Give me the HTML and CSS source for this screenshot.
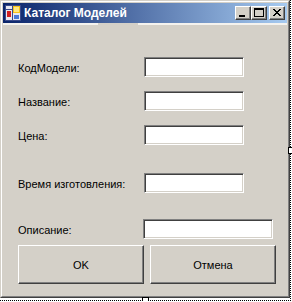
FILE: index.html
```html
<!DOCTYPE html>
<html lang="ru">
<head>
    <meta charset="UTF-8">
    <title>Каталог Моделей</title>
    <link rel="stylesheet" href="styles.css">
</head>
<body>
    <div class="surface">
        <div class="window">
            <div class="frame">
                <div class="titlebar">
                    <svg class="app-icon" width="16" height="16" viewBox="0 0 16 16">
                        <rect x="0.5" y="0.5" width="15" height="15" fill="#e8e8f0" stroke="#3a4a8a"/>
                        <line x1="1" y1="4.5" x2="15" y2="4.5" stroke="#3a4a8a"/>
                        <line x1="7.5" y1="1" x2="7.5" y2="15" stroke="#3a4a8a"/>
                        <rect x="8" y="1" width="7" height="7" fill="#f7c21a"/>
                        <rect x="9" y="2" width="5" height="5" fill="#ffe680"/>
                        <rect x="2" y="6" width="4" height="6" fill="#d22020"/>
                        <rect x="9" y="10" width="5" height="4" fill="#4a7ad8"/>
                    </svg>
                    <span class="title">Каталог Моделей</span>
                    <div class="caption-buttons">
                        <span class="cap-btn">
                            <svg width="14" height="12" viewBox="0 0 14 12"><rect x="3" y="8" width="6" height="2" fill="#000"/></svg>
                        </span>
                        <span class="cap-btn">
                            <svg width="14" height="12" viewBox="0 0 14 12"><rect x="2.5" y="1.5" width="9" height="8" fill="none" stroke="#000"/><rect x="2" y="1" width="10" height="2" fill="#000"/></svg>
                        </span>
                        <span class="cap-btn close">
                            <svg width="14" height="12" viewBox="0 0 14 12"><path d="M3 2 L10 9 M4 2 L11 9 M10 2 L3 9 M11 2 L4 9" stroke="#000" stroke-width="1"/></svg>
                        </span>
                    </div>
                </div>
                <div class="strip"></div>
                <div class="client">
                    <div class="row">
                        <label class="field-label">КодМодели:</label>
                        <input class="textbox" type="text">
                    </div>
                    <div class="row">
                        <label class="field-label">Название:</label>
                        <input class="textbox" type="text">
                    </div>
                    <div class="row">
                        <label class="field-label">Цена:</label>
                        <input class="textbox" type="text">
                    </div>
                    <div class="row gap-big">
                        <label class="field-label">Время изготовления:</label>
                        <input class="textbox" type="text">
                    </div>
                    <div class="row gap-desc">
                        <label class="field-label narrow">Описание:</label>
                        <input class="textbox wide" type="text">
                    </div>
                    <div class="buttons">
                        <button class="win-btn">OK</button>
                        <button class="win-btn">Отмена</button>
                    </div>
                </div>
            </div>
        </div>
        <span class="handle handle-right"></span>
        <span class="handle handle-bottom"></span>
    </div>
</body>
</html>
```

FILE: styles.css
```css
body {
    margin: 0;
    background: #fff;
    overflow: hidden;
    font-family: 'Liberation Sans', Arial, sans-serif;
    font-size: 11px;
}

.surface {
    position: relative;
    width: 290px;
    height: 300px;
    border-right: 1px dotted #000;
    border-bottom: 1px dotted #000;
}

.window {
    width: 290px;
    height: 298px;
    box-sizing: border-box;
    border: 1px solid;
    border-color: #d4d0c8 #404040 #404040 #d4d0c8;
    background: #d4d0c8;
}

.frame {
    height: 100%;
    box-sizing: border-box;
    border: 1px solid;
    border-color: #fff #808080 #808080 #fff;
    padding: 1px;
    display: flex;
    flex-direction: column;
}

.titlebar {
    height: 20px;
    display: flex;
    align-items: center;
    padding-left: 2px;
    padding-right: 2px;
    background: linear-gradient(to right, #0a246a, #a6caf0);
}

.app-icon {
    flex: none;
}

.title {
    margin-left: 3px;
    color: #fff;
    font-family: 'Liberation Sans', Arial, sans-serif;
    font-weight: bold;
    font-size: 12px;
    flex: 1;
}

.caption-buttons {
    display: flex;
    align-items: center;
}

.cap-btn {
    width: 16px;
    height: 14px;
    box-sizing: border-box;
    background: #d4d0c8;
    border: 1px solid;
    border-color: #fff #404040 #404040 #fff;
    box-shadow: inset -1px -1px #808080;
    display: flex;
}

.cap-btn.close {
    margin-left: 2px;
}

.strip {
    height: 2px;
    background: linear-gradient(to right, #f4f2ee 0, #f4f2ee 95px, #d4d0c8 95px, #d4d0c8 135px, #f4f2ee 135px);
}

.client {
    flex: 1;
    padding: 32px 0 0 15px;
}

.row {
    display: flex;
    align-items: center;
    height: 20px;
    margin-top: 14px;
}

.row:first-child {
    margin-top: 0;
}

.row.gap-big {
    margin-top: 28px;
}

.row.gap-desc {
    margin-top: 26px;
}

.field-label {
    width: 126px;
    padding-top: 2px;
    color: #000;
}

.field-label.narrow {
    width: 125px;
}

.textbox {
    width: 100px;
    height: 20px;
    box-sizing: border-box;
    margin: 0;
    padding: 0 2px;
    border: 1px solid;
    border-color: #808080 #fff #fff #808080;
    box-shadow: inset 1px 1px #404040, inset -1px -1px #d4d0c8;
    background: #fff;
    font: inherit;
    outline: none;
}

.textbox.wide {
    width: 130px;
}

.buttons {
    display: flex;
    gap: 6px;
    margin-top: 6px;
}

.win-btn {
    width: 126px;
    height: 39px;
    margin: 0;
    padding: 0;
    background: #d4d0c8;
    border: 1px solid;
    border-color: #fff #404040 #404040 #fff;
    box-shadow: inset -1px -1px #808080;
    font: inherit;
    color: #000;
}

.handle {
    position: absolute;
    width: 5px;
    height: 5px;
    background: #fff;
    border: 1px solid #000;
}

.handle-right {
    left: 288px;
    top: 147px;
}

.handle-bottom {
    left: 142px;
    top: 297px;
}
```
